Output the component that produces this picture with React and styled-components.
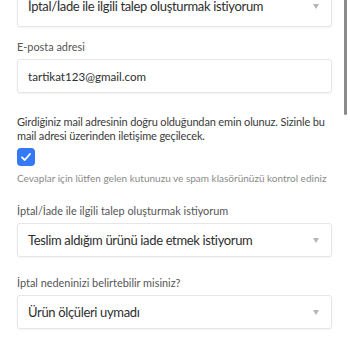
import React from 'react'
import styled, { createGlobalStyle } from 'styled-components'

const GlobalStyle = createGlobalStyle`
  html, body {
    margin: 0;
    padding: 0;
    background: #fff;
    overflow: hidden;
  }
  body {
    font-family: Lato, "Open Sans", "Noto Sans", sans-serif;
    color: #333;
  }
`

const Page = styled.div`
  width: 350px;
  height: 350px;
  position: relative;
  overflow: hidden;
`

const Form = styled.form`
  display: flex;
  flex-direction: column;
  padding: 0 18px 0 17px;
  margin-top: -15px;
`

const Label = styled.label`
  display: block;
  font-size: 10.9px;
  line-height: 14px;
  color: #555;
  margin-top: ${p => p.$top || 0}px;
  margin-bottom: 5px;
`

const Box = styled.div`
  height: ${p => p.$height || 34}px;
  box-sizing: border-box;
  border: 1px solid #e6e6e6;
  border-radius: 3px;
  box-shadow: 0 1px 2px rgba(0, 0, 0, 0.05);
  display: flex;
  align-items: center;
  padding: 0 12px 0 10px;
  font-size: ${p => p.$size || 13}px;
  letter-spacing: ${p => p.$spacing ?? -0.35}px;
  color: #2e2e2e;
`

const Value = styled.span`
  flex-grow: 1;
  white-space: nowrap;
`

const Arrow = styled.span`
  width: 0;
  height: 0;
  border-left: 3px solid transparent;
  border-right: 3px solid transparent;
  border-top: 5px solid #b5b5b5;
`

const Note = styled.p`
  margin: 22px 0 0;
  font-size: 11px;
  line-height: 13.5px;
  letter-spacing: -0.15px;
  color: #3a3a3a;
`

const Check = styled.div`
  width: 18px;
  height: 18px;
  margin-top: 6px;
  border-radius: 4px;
  background: #3479f5;
  display: flex;
  align-items: center;
  justify-content: center;
`

const Hint = styled.p`
  margin: 6px 0 0;
  font-size: 10px;
  line-height: 12px;
  color: #8a8a8a;
  white-space: nowrap;
`

const ScrollThumb = styled.div`
  position: absolute;
  top: 0;
  left: 344px;
  width: 3px;
  height: 115px;
  background: #8a8a8a;
  border-radius: 0 0 2px 2px;
`

const Select = ({ value, height }) => (
  <Box $height={height}>
    <Value>{value}</Value>
    <Arrow />
  </Box>
)

const App = () => (
  <Page>
    <GlobalStyle />
    <Form>
      <Select height={42} value='İptal/İade ile ilgili talep oluşturmak istiyorum' />

      <Label $top={13}>E-posta adresi</Label>
      <Box $size={11.6} $spacing={0}>
        <Value>tartikat123@gmail.com</Value>
      </Box>

      <Note>
        Girdiğiniz mail adresinin doğru olduğundan emin olunuz. Sizinle bu mail adresi üzerinden iletişime geçilecek.
      </Note>
      <Check>
        <svg width='12' height='12' viewBox='0 0 12 12'>
          <path d='M2 6.3 L4.8 9 L10 3' fill='none' stroke='#fff' strokeWidth='1.8' strokeLinecap='round' strokeLinejoin='round' />
        </svg>
      </Check>
      <Hint>Cevaplar için lütfen gelen kutunuzu ve spam klasörünüzü kontrol ediniz</Hint>

      <Label $top={20}>İptal/İade ile ilgili talep oluşturmak istiyorum</Label>
      <Select value='Teslim aldığım ürünü iade etmek istiyorum' />

      <Label $top={19}>İptal nedeninizi belirtebilir misiniz?</Label>
      <Select value='Ürün ölçüleri uymadı' />
    </Form>
    <ScrollThumb />
  </Page>
)

export default App
